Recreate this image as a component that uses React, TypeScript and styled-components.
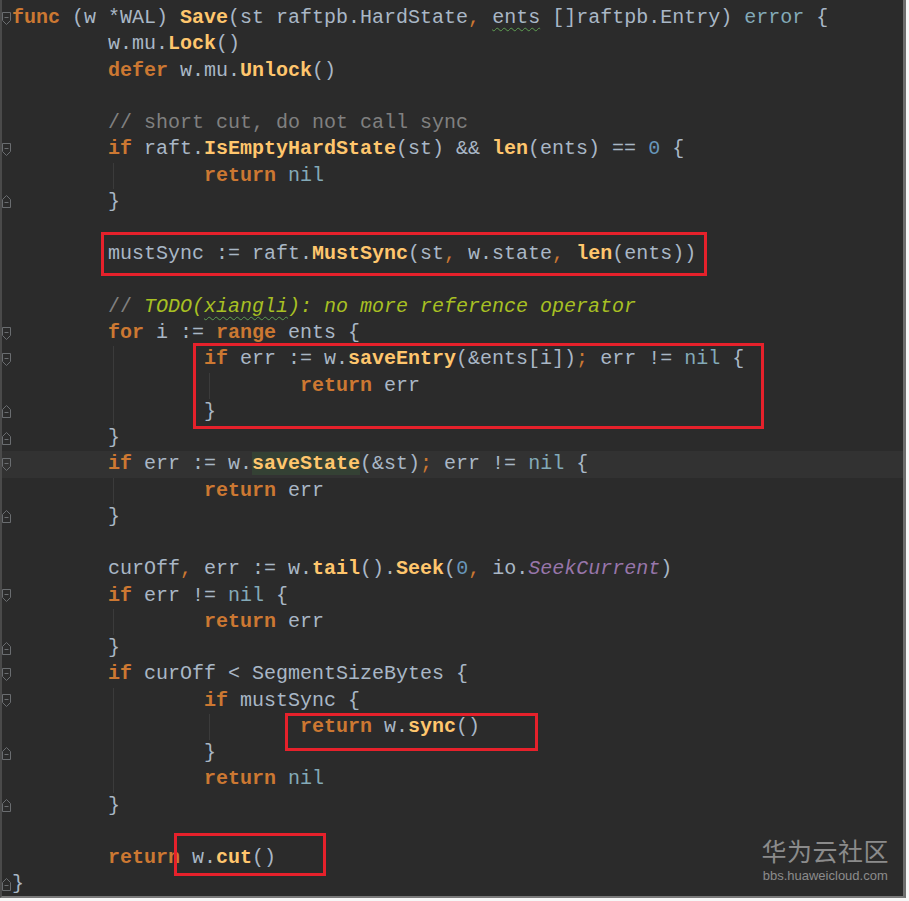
import React from "react";
import styled, { createGlobalStyle, css } from "styled-components";

const GlobalStyle = createGlobalStyle`
  html, body { margin: 0; padding: 0; background: #f7f7f7; }
  #root { width: 909px; height: 901px; }
`;

type Kind =
  | "tx"
  | "kw"
  | "fn"
  | "cm"
  | "todo"
  | "todoTypo"
  | "num"
  | "nil"
  | "pun"
  | "cst"
  | "typo"
  | "hl";

type Tok = [Kind, string];

interface LineData {
  indent: number;
  toks: Tok[];
  fold?: "open" | "close";
  current?: boolean;
}

const LINE_H = 26.25;
const CH = 12;

const kindStyles: Record<Kind, ReturnType<typeof css>> = {
  tx: css`color: #a9b7c6;`,
  kw: css`color: #cc7832; font-weight: bold;`,
  fn: css`color: #ffc66d; font-weight: bold;`,
  cm: css`color: #808080;`,
  todo: css`color: #a8c023; font-style: italic;`,
  todoTypo: css`
    color: #a8c023;
    font-style: italic;
    text-decoration: underline wavy #5e9e52;
    text-decoration-thickness: 1px;
    text-underline-offset: 4px;
  `,
  num: css`color: #6897bb;`,
  nil: css`color: #83aab8;`,
  pun: css`color: #cc7832;`,
  cst: css`color: #9876aa; font-style: italic;`,
  typo: css`
    color: #a9b7c6;
    text-decoration: underline wavy #5e9e52;
    text-decoration-thickness: 1px;
    text-underline-offset: 4px;
  `,
  hl: css`
    color: #ffc66d;
    font-weight: bold;
    background: #344134;
  `,
};

const Token = styled.span<{ $kind: Kind }>`
  ${(p) => kindStyles[p.$kind]}
`;

const Page = styled.div`
  width: 909px;
  height: 901px;
  background: #f7f7f7;
`;

const Editor = styled.div`
  position: relative;
  width: 901px;
  height: 896px;
  background: #2b2b2b;
  border-left: 2px solid #4a4a4a;
  border-right: 3px solid #6e6e6e;
  border-bottom: 2px solid #7a7a7a;
  overflow: hidden;
  font-family: "Liberation Mono", "DejaVu Sans Mono", monospace;
  font-size: 20px;
`;

const Lines = styled.div`
  display: flex;
  flex-direction: column;
  padding-top: 5px;
`;

const Line = styled.div<{ $current?: boolean }>`
  display: flex;
  align-items: stretch;
  height: ${LINE_H}px;
  line-height: ${LINE_H}px;
  white-space: pre;
  background: ${(p) => (p.$current ? "#323232" : "transparent")};
`;

const Gutter = styled.div`
  width: 10px;
  flex: 0 0 10px;
  display: flex;
  align-items: center;
  justify-content: flex-start;
`;

const Code = styled.div`
  display: flex;
  align-items: stretch;
`;

const Indent = styled.span<{ $guide: boolean }>`
  display: inline-block;
  width: ${CH * 8}px;
  height: 100%;
  ${(p) =>
    p.$guide &&
    css`
      background: linear-gradient(#3b3b3b, #3b3b3b) 5px 0 / 1px 100% no-repeat;
    `}
`;

const Text = styled.span`
  display: inline-block;
`;

const Mark = styled.div<{ $l: number; $t: number; $w: number; $h: number }>`
  position: absolute;
  left: ${(p) => p.$l}px;
  top: ${(p) => p.$t}px;
  width: ${(p) => p.$w}px;
  height: ${(p) => p.$h}px;
  box-sizing: border-box;
  border: 3px solid #e6212b;
  pointer-events: none;
`;

const Watermark = styled.div`
  position: absolute;
  right: 14px;
  top: 837px;
  display: flex;
  flex-direction: column;
  align-items: center;
  gap: 5px;
  color: #8b8b8b;
`;

const WmTitle = styled.div`
  font-family: "Noto Sans CJK SC", "Noto Sans", sans-serif;
  font-size: 25px;
  line-height: 27px;
  letter-spacing: 0.5px;
`;

const WmUrl = styled.div`
  font-family: "Liberation Sans", Arial, sans-serif;
  font-size: 13px;
  line-height: 14px;
`;

const FoldIcon: React.FC<{ type: "open" | "close" }> = ({ type }) => (
  <svg width="10" height="15" viewBox="0 0 10 15" style={{ display: "block" }}>
    {type === "open" ? (
      <path d="M0.5 1.5 H8.5 V9.5 L4.5 13.5 L0.5 9.5 Z" fill="none" stroke="#6a6d70" strokeWidth="1" />
    ) : (
      <path d="M0.5 13.5 H8.5 V5.5 L4.5 1.5 L0.5 5.5 Z" fill="none" stroke="#6a6d70" strokeWidth="1" />
    )}
    <path d={type === "open" ? "M2.5 6.5 H6.5" : "M2.5 8.5 H6.5"} stroke="#6a6d70" strokeWidth="1" />
  </svg>
);

const L = (indent: number, toks: Tok[], extra: Partial<LineData> = {}): LineData => ({
  indent,
  toks,
  ...extra,
});

const retErr: Tok[] = [["kw", "return"], ["tx", " err"]];

const lines: LineData[] = [
  L(
    0,
    [
      ["kw", "func"],
      ["tx", " (w *WAL) "],
      ["fn", "Save"],
      ["tx", "(st raftpb.HardState"],
      ["pun", ","],
      ["tx", " "],
      ["typo", "ents"],
      ["tx", " []raftpb.Entry) "],
      ["nil", "error"],
      ["tx", " {"],
    ],
    { fold: "open" }
  ),
  L(1, [["tx", "w.mu."], ["fn", "Lock"], ["tx", "()"]]),
  L(1, [["kw", "defer"], ["tx", " w.mu."], ["fn", "Unlock"], ["tx", "()"]]),
  L(0, []),
  L(1, [["cm", "// short cut, do not call sync"]]),
  L(
    1,
    [
      ["kw", "if"],
      ["tx", " raft."],
      ["fn", "IsEmptyHardState"],
      ["tx", "(st) && "],
      ["fn", "len"],
      ["tx", "(ents) == "],
      ["num", "0"],
      ["tx", " {"],
    ],
    { fold: "open" }
  ),
  L(2, [["kw", "return"], ["tx", " "], ["nil", "nil"]]),
  L(1, [["tx", "}"]], { fold: "close" }),
  L(0, []),
  L(1, [
    ["tx", "mustSync := raft."],
    ["fn", "MustSync"],
    ["tx", "(st"],
    ["pun", ","],
    ["tx", " w.state"],
    ["pun", ","],
    ["tx", " "],
    ["fn", "len"],
    ["tx", "(ents))"],
  ]),
  L(0, []),
  L(1, [
    ["cm", "// "],
    ["todo", "TODO("],
    ["todoTypo", "xiangli"],
    ["todo", "): no more reference operator"],
  ]),
  L(1, [["kw", "for"], ["tx", " i := "], ["kw", "range"], ["tx", " ents {"]], { fold: "open" }),
  L(
    2,
    [
      ["kw", "if"],
      ["tx", " err := w."],
      ["fn", "saveEntry"],
      ["tx", "(&ents[i])"],
      ["pun", ";"],
      ["tx", " err != "],
      ["nil", "nil"],
      ["tx", " {"],
    ],
    { fold: "open" }
  ),
  L(3, retErr),
  L(2, [["tx", "}"]], { fold: "close" }),
  L(1, [["tx", "}"]], { fold: "close" }),
  L(
    1,
    [
      ["kw", "if"],
      ["tx", " err := w."],
      ["hl", "saveState"],
      ["tx", "(&st)"],
      ["pun", ";"],
      ["tx", " err != "],
      ["nil", "nil"],
      ["tx", " {"],
    ],
    { fold: "open", current: true }
  ),
  L(2, retErr),
  L(1, [["tx", "}"]], { fold: "close" }),
  L(0, []),
  L(1, [
    ["tx", "curOff"],
    ["pun", ","],
    ["tx", " err := w."],
    ["fn", "tail"],
    ["tx", "()."],
    ["fn", "Seek"],
    ["tx", "("],
    ["num", "0"],
    ["pun", ","],
    ["tx", " io."],
    ["cst", "SeekCurrent"],
    ["tx", ")"],
  ]),
  L(1, [["kw", "if"], ["tx", " err != "], ["nil", "nil"], ["tx", " {"]], { fold: "open" }),
  L(2, retErr),
  L(1, [["tx", "}"]], { fold: "close" }),
  L(1, [["kw", "if"], ["tx", " curOff < SegmentSizeBytes {"]], { fold: "open" }),
  L(2, [["kw", "if"], ["tx", " mustSync {"]], { fold: "open" }),
  L(3, [["kw", "return"], ["tx", " w."], ["fn", "sync"], ["tx", "()"]]),
  L(2, [["tx", "}"]], { fold: "close" }),
  L(2, [["kw", "return"], ["tx", " "], ["nil", "nil"]]),
  L(1, [["tx", "}"]], { fold: "close" }),
  L(0, []),
  L(1, [["kw", "return"], ["tx", " w."], ["fn", "cut"], ["tx", "()"]]),
  L(0, [["tx", "}"]], { fold: "close" }),
];

const marks = [
  { l: 99, t: 232, w: 606, h: 44 },
  { l: 191, t: 343, w: 571, h: 86 },
  { l: 283, t: 713, w: 253, h: 38 },
  { l: 172, t: 833, w: 152, h: 43 },
];

export default function App() {
  return (
    <Page>
      <GlobalStyle />
      <Editor>
        <Lines>
          {lines.map((ln, i) => (
            <Line key={i} $current={ln.current}>
              <Gutter>{ln.fold && <FoldIcon type={ln.fold} />}</Gutter>
              <Code>
                {Array.from({ length: ln.indent }).map((_, k) => (
                  <Indent key={k} $guide={k >= 1 && k < ln.indent} />
                ))}
                <Text>
                  {ln.toks.map(([k, s], j) => (
                    <Token key={j} $kind={k}>
                      {s}
                    </Token>
                  ))}
                </Text>
              </Code>
            </Line>
          ))}
        </Lines>
        {marks.map((m, i) => (
          <Mark key={i} $l={m.l} $t={m.t} $w={m.w} $h={m.h} />
        ))}
        <Watermark>
          <WmTitle>华为云社区</WmTitle>
          <WmUrl>bbs.huaweicloud.com</WmUrl>
        </Watermark>
      </Editor>
    </Page>
  );
}
